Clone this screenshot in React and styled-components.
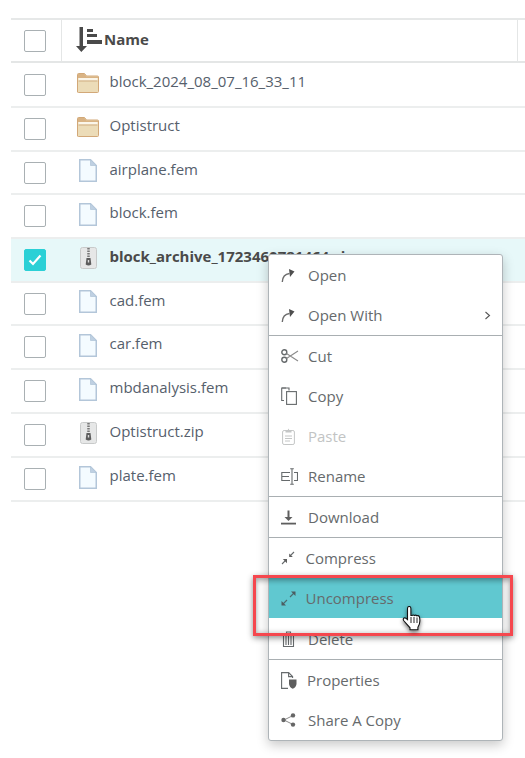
import React from "react";
import styled, { createGlobalStyle } from "styled-components";

const Global = createGlobalStyle`
  html, body { margin: 0; padding: 0; background: #fff; }
  body { font-family: "Open Sans", "Liberation Sans", sans-serif; }
`;

const Page = styled.div`
  position: relative;
  width: 525px;
  height: 758px;
  overflow: hidden;
  padding: 18px 0 0 11px;
  box-sizing: border-box;
`;

const Table = styled.div`
  display: flex;
  flex-direction: column;
  border-top: 2px solid #e6e8e8;
`;

const HeaderRow = styled.div`
  display: flex;
  align-items: stretch;
  height: 41px;
  border-bottom: 2px solid #e4e6e6;
`;

const CheckCell = styled.div`
  width: 51px;
  box-sizing: border-box;
  flex: none;
  display: flex;
  align-items: center;
  padding-left: 13px;
  border-right: ${(p) => (p.$divided ? "1px solid #e4e6e6" : "none")};
`;

const NameHeader = styled.div`
  display: flex;
  align-items: center;
  width: 456px;
  box-sizing: border-box;
  padding: 0 0 2px 14px;
  gap: 2px;
  border-right: 1px solid #e4e6e6;
  font-size: 15px;
  font-weight: 700;
  color: #4a4a4a;
`;

const HeaderLabel = styled.span`
  position: relative;
  top: -1px;
`;

const Row = styled.div`
  display: flex;
  align-items: center;
  height: ${(p) => p.$h}px;
  box-sizing: border-box;
  border-bottom: 2px solid #eceeee;
  background: ${(p) => (p.$selected ? "#e7f8f9" : "#fff")};
`;

const Box = styled.span`
  width: 22px;
  height: 22px;
  box-sizing: border-box;
  border-radius: 2px;
  display: flex;
  align-items: center;
  justify-content: center;
  border: 1px solid ${(p) => (p.$checked ? "#2bd0d6" : "#a9b0b3")};
  background: ${(p) => (p.$checked ? "#2bd0d6" : "#fff")};
`;

const IconSlot = styled.span`
  width: 47.500px;
  flex: none;
  display: flex;
  padding: 0 0 4px 15px;
  box-sizing: border-box;
`;

const FileName = styled.span`
  font-size: 15px;
  font-weight: ${(p) => (p.$selected ? 700 : 400)};
  color: ${(p) => (p.$selected ? "#4a4a4a" : "#56606c")};
  white-space: nowrap;
  position: relative;
  top: -4px;
`;

const Menu = styled.div`
  position: absolute;
  left: 268px;
  top: 254px;
  width: 235px;
  height: 487px;
  box-sizing: border-box;
  background: #fff;
  border: 1px solid #aeb4b8;
  border-radius: 3px;
  box-shadow: 0 4px 12px rgba(0, 0, 0, 0.22);
`;

const MenuItem = styled.div`
  display: flex;
  align-items: center;
  height: ${(p) => (p.$tall ? 41 : 40)}px;
  box-sizing: border-box;
  padding-left: 12px;
  font-size: 15px;
  color: ${(p) => (p.$disabled ? "#c2c4c4" : "#666a6c")};
  background: ${(p) => (p.$active ? "#60c8d0" : "transparent")};
`;

const MenuIcon = styled.span`
  width: ${(p) => p.$w || 27}px;
  flex: none;
  display: flex;
`;

const MenuText = styled.span`
  flex: 1;
`;

const Chevron = styled.span`
  display: flex;
  margin-right: 11px;
`;

const Divider = styled.div`
  height: 1px;
  background: #a9afb2;
`;

const Highlight = styled.div`
  position: absolute;
  left: 253px;
  top: 575px;
  width: 260px;
  height: 61px;
  box-sizing: border-box;
  border: 3px solid #f5474e;
  box-shadow: 0 2px 6px rgba(0, 0, 0, 0.45), inset 0 3px 5px rgba(0, 0, 0, 0.3), inset 0 -2px 4px rgba(0, 0, 0, 0.12);
`;

const Cursor = styled.svg`
  position: absolute;
  left: 402px;
  top: 606px;
  filter: drop-shadow(0 2px 2px rgba(0, 0, 0, 0.55));
`;

const FolderIcon = () => (
  <svg width="22" height="20" viewBox="0 0 22 20">
    <path d="M.5 19V1.5q0-1 1-1h6l2 2.5h11q1 0 1 1V18.5q0 1-1 1H1.500q-1 0-1-.5z" fill="#ecdcb8" stroke="#d2a878" />
    <path d="M1 1h6.500l2 2.500H21V5H1z" fill="#d9b384" />
    <rect x="1.500" y="5" width="19" height="2.500" fill="#fbf6ea" />
    <rect x="1.500" y="7.500" width="19" height="1" fill="#cfae82" />
  </svg>
);

const FileIcon = () => (
  <svg width="18" height="23" viewBox="0 0 18 23" style={{ marginLeft: 2 }}>
    <path d="M.75.75H11.500L17.250 6.500V22.250H.75z" fill="#f4fbff" stroke="#b3c6d9" strokeWidth="1.500" />
    <path d="M11.500.75V6.500h5.750z" fill="#bfd0e2" stroke="#b3c6d9" strokeWidth=".8" />
  </svg>
);

const ZipIcon = () => (
  <svg width="17" height="22" viewBox="0 0 17 22" style={{ marginLeft: 3 }}>
    <rect x=".5" y=".5" width="16" height="21" rx="2" fill="#e6e7e7" stroke="#c8caca" />
    <path d="M8.500 1v10" stroke="#777" strokeWidth="2.500" strokeDasharray="1.500 1" />
    <path d="M6.500 11h4l.8 6.500q-2.800 2-5.600 0z" fill="#5c5c5c" />
    <rect x="7.800" y="13" width="1.400" height="2.500" fill="#ddd" />
  </svg>
);

const icons = { folder: FolderIcon, file: FileIcon, zip: ZipIcon };

const SortIcon = () => (
  <svg width="26" height="26" viewBox="0 0 26 26">
    <path d="M3.500 0h3.500v19h4L5.300 25 0 19h3.500z" fill="#4a4a4a" />
    <rect x="11" y="2" width="6" height="3" fill="#4a4a4a" />
    <rect x="11" y="7" width="10" height="3" fill="#4a4a4a" />
    <rect x="11" y="13" width="15" height="4" fill="#4a4a4a" />
  </svg>
);

const Check = () => (
  <svg width="14" height="12" viewBox="0 0 14 12">
    <path d="M1.500 6.500 5 10l7.500-8.500" fill="none" stroke="#fff" strokeWidth="2.200" />
  </svg>
);

const S = { fill: "none", stroke: "#666a6c", strokeWidth: 1.1 };

const OpenIcon = () => (
  <svg width="15" height="15" viewBox="0 0 15 15">
    <path d="M1.300 14C1.500 9 4 6 8.500 5.500" fill="none" stroke="#6c6c6c" strokeWidth="1.400" />
    <path d="M8 1 13.500 3.500 9 9z" fill="#4e4e4e" />
  </svg>
);

const ScissorsIcon = () => (
  <svg width="18" height="14" viewBox="0 0 18 14">
    <circle cx="3.300" cy="3.300" r="2.500" {...S} strokeWidth="1.400" />
    <circle cx="3.300" cy="10.700" r="2.500" {...S} strokeWidth="1.400" />
    <path d="M5.500 4.500 17 12M5.500 9.500 17 2" {...S} stroke="#8a8a8a" />
  </svg>
);

const CopyIcon = () => (
  <svg width="16" height="18" viewBox="0 0 16 18">
    <path d="M5 1H.7v12.500H3" {...S} />
    <path d="M1 1h7v2.500" {...S} />
    <rect x="5.600" y="4.600" width="9.800" height="12.800" {...S} />
  </svg>
);

const PasteIcon = () => (
  <svg width="13" height="17" viewBox="0 0 13 17" style={{ marginLeft: 1 }}>
    <rect x=".6" y="2.500" width="11.800" height="14" rx="1.500" fill="none" stroke="#c4c6c6" />
    <path d="M3.500 4.500V2.500h2l1-2 1 2h2v2z" fill="#c4c6c6" />
    <path d="M3 8h7M3 10.500h7M3 13h5" stroke="#c4c6c6" fill="none" />
  </svg>
);

const RenameIcon = () => (
  <svg width="17" height="17" viewBox="0 0 17 17">
    <path d="M9 4.500H.8v8H9M.8 8.500H8" {...S} />
    <path d="M13 4.500h3.500v8H13" {...S} />
    <path d="M11 1v15M9.200.8h3.600M9.200 16.200h3.600" {...S} />
  </svg>
);

const DownloadIcon = () => (
  <svg width="15" height="15" viewBox="0 0 15 15">
    <path d="M6.500.5h2v6.500h3l-4 4-4-4h3z" fill="#5e5e5e" />
    <rect x="0" y="12.700" width="15" height="1.800" fill="#5e5e5e" />
  </svg>
);

const CompressIcon = () => (
  <svg width="14" height="14" viewBox="0 0 14 14">
    <path d="M1 13 5.500 8.500" {...S} />
    <path d="M1.800 8h4.200v4.200z" fill="#5e5e5e" />
    <path d="M13 1 9.500 4.500" {...S} />
    <path d="M8.200 2.500V6h3.600z" fill="#5e5e5e" />
  </svg>
);

const ExpandIcon = () => (
  <svg width="15" height="15" viewBox="0 0 15 15">
    <path d="M2 13 6 9M9 6l4-4" fill="none" stroke="#4c6a6e" strokeWidth="1.100" />
    <path d="M.5 10v4.500H5z" fill="#4c5c60" />
    <path d="M10 .5h4.500V5z" fill="#4c5c60" />
  </svg>
);

const TrashIcon = () => (
  <svg width="13" height="16" viewBox="0 0 13 16" style={{ marginLeft: 1 }}>
    <path d="M.5 3h12M4.500 2.500V1h4v1.500" {...S} />
    <path d="M1.500 3.500V15.500h10V3.500M4 5v9M6.500 5v9M9 5v9" {...S} />
  </svg>
);

const PropertiesIcon = () => (
  <svg width="16" height="17" viewBox="0 0 16 17">
    <path d="M7 16.400H.6V.6h7l4 4v1.500" {...S} />
    <path d="M7.600.6v4h4" {...S} />
    <path d="M8 7.500h7.500v4.500q-.5 3.500-3.750 4.700Q8.500 15.500 8 12z" fill="#5e5e5e" />
  </svg>
);

const ShareIcon = () => (
  <svg width="15" height="14" viewBox="0 0 15 14">
    <path d="M3 7 12 2.500M3 7l9 4.500" fill="none" stroke="#8a8a8a" strokeWidth="1" />
    <circle cx="2.500" cy="7" r="2.200" fill="#666" />
    <circle cx="12" cy="2.400" r="2.200" fill="#666" />
    <circle cx="12" cy="11.600" r="2.200" fill="#666" />
  </svg>
);

const rows = [
  { name: "block_2024_08_07_16_33_11", kind: "folder", h: 45 },
  { name: "Optistruct", kind: "folder", h: 44 },
  { name: "airplane.fem", kind: "file", h: 43 },
  { name: "block.fem", kind: "file", h: 44 },
  { name: "block_archive_1723460781464.zip", kind: "zip", h: 44, selected: true },
  { name: "cad.fem", kind: "file", h: 43 },
  { name: "car.fem", kind: "file", h: 44 },
  { name: "mbdanalysis.fem", kind: "file", h: 44 },
  { name: "Optistruct.zip", kind: "zip", h: 44 },
  { name: "plate.fem", kind: "file", h: 44 },
];

const menu = [
  [
    { label: "Open", Icon: OpenIcon },
    { label: "Open With", Icon: OpenIcon, more: true },
  ],
  [
    { label: "Cut", Icon: ScissorsIcon },
    { label: "Copy", Icon: CopyIcon },
    { label: "Paste", Icon: PasteIcon, disabled: true },
    { label: "Rename", Icon: RenameIcon },
  ],
  [{ label: "Download", Icon: DownloadIcon }],
  [
    { label: "Compress", Icon: CompressIcon, w: 24.500 },
    { label: "Uncompress", Icon: ExpandIcon, w: 24.500, active: true },
    { label: "Delete", Icon: TrashIcon, tall: true },
  ],
  [
    { label: "Properties", Icon: PropertiesIcon, w: 26 },
    { label: "Share A Copy", Icon: ShareIcon },
  ],
];

export default function App() {
  return (
    <Page>
      <Global />
      <Table>
        <HeaderRow>
          <CheckCell $divided>
            <Box />
          </CheckCell>
          <NameHeader>
            <SortIcon />
            <HeaderLabel>Name</HeaderLabel>
          </NameHeader>
        </HeaderRow>
        {rows.map((r) => {
          const Icon = icons[r.kind];
          return (
            <Row key={r.name} $h={r.h} $selected={r.selected}>
              <CheckCell>
                <Box $checked={r.selected}>{r.selected && <Check />}</Box>
              </CheckCell>
              <IconSlot>
                <Icon />
              </IconSlot>
              <FileName $selected={r.selected}>{r.name}</FileName>
            </Row>
          );
        })}
      </Table>
      <Menu>
        {menu.map((group, i) => (
          <React.Fragment key={i}>
            {i > 0 && <Divider />}
            {group.map(({ label, Icon, w, more, disabled, active, tall }) => (
              <MenuItem key={label} $disabled={disabled} $active={active} $tall={tall}>
                <MenuIcon $w={w}>
                  <Icon />
                </MenuIcon>
                <MenuText>{label}</MenuText>
                {more && (
                  <Chevron>
                    <svg width="7" height="9" viewBox="0 0 7 9">
                      <path d="M1.500 1 5.500 4.500 1.500 8" fill="none" stroke="#555" strokeWidth="1.100" />
                    </svg>
                  </Chevron>
                )}
              </MenuItem>
            ))}
          </React.Fragment>
        ))}
      </Menu>
      <Highlight />
      <Cursor width="20" height="26" viewBox="0 0 20 26">
        <path
          d="M5.500 2.500q0-2 1.700-2t1.700 2v7l1 0q1.500-1 2.500 0 1.500-.8 2.500.3 1.800-.5 2.500 1 .5 1.500.5 4 0 3.500-2 6.500v2.500H8v-2L2 15q-1.500-2 0-3 1.500-.5 3.500 1.500z"
          fill="#fff"
          stroke="#111"
          strokeWidth="1.100"
        />
        <path d="M9 11v6M12 11v6M15 11.500v5.500" stroke="#111" strokeWidth=".9" fill="none" />
      </Cursor>
    </Page>
  );
}
